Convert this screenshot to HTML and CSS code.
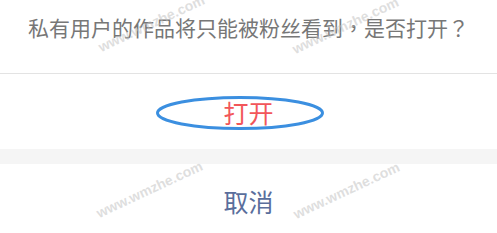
FILE: index.html
```html
<!DOCTYPE html>
<html lang="zh">
<head>
<meta charset="utf-8">
<link rel="stylesheet" href="styles.css">
</head>
<body>
<div class="sheet">
  <div class="msg">私有用户的作品将只能被粉丝看到<span class="punct">，</span>是否打开<span class="punct">？</span></div>
  <div class="open">打开
    <svg class="ring" width="170" height="36" viewBox="0 0 170 36"><ellipse cx="85" cy="18" rx="82.5" ry="15.5" fill="none" stroke="#3b8fe0" stroke-width="3"/></svg>
  </div>
  <div class="gap"></div>
  <div class="cancel">取消</div>
  <span class="wm wm1">www.wmzhe.com</span>
  <span class="wm wm2">www.wmzhe.com</span>
  <span class="wm wm3">www.wmzhe.com</span>
  <span class="wm wm4">www.wmzhe.com</span>
</div>
</body>
</html>
```
FILE: styles.css
```css
html, body { margin: 0; padding: 0; background: #fff; }
body { font-family: "Noto Sans CJK SC", "Noto Sans", sans-serif; }
.sheet { position: relative; width: 497px; height: 233px; overflow: hidden; }
.msg {
  height: 74px; box-sizing: border-box; padding-bottom: 20px;
  display: flex; align-items: center; justify-content: center;
  font-size: 21px; color: #777; border-bottom: 1px solid #e3e3e3;
}
.punct { font-family: "Noto Sans CJK TC", "Noto Sans CJK SC", sans-serif; }
.open {
  position: relative; height: 75px; display: flex; align-items: center; justify-content: center;
  font-size: 25px; color: #f2565a;
}
.ring { position: absolute; left: 155px; top: 21px; }
.gap { height: 15px; background: #f5f5f5; }
.cancel {
  height: 68px; box-sizing: border-box; padding-top: 5px;
  display: flex; align-items: center; justify-content: center;
  font-size: 25px; color: #5a6e9c;
}
.wm {
  position: absolute; font-family: "Liberation Sans", Arial, sans-serif; font-weight: bold;
  font-size: 14px; line-height: 14px; color: rgba(190,190,190,0.5);
  transform: rotate(-25deg); transform-origin: left bottom; white-space: nowrap;
}
.wm1 { left: 102px; top: 40px; }
.wm2 { left: 296px; top: 42px; }
.wm3 { left: 100px; top: 206px; }
.wm4 { left: 297px; top: 207px; }
```
